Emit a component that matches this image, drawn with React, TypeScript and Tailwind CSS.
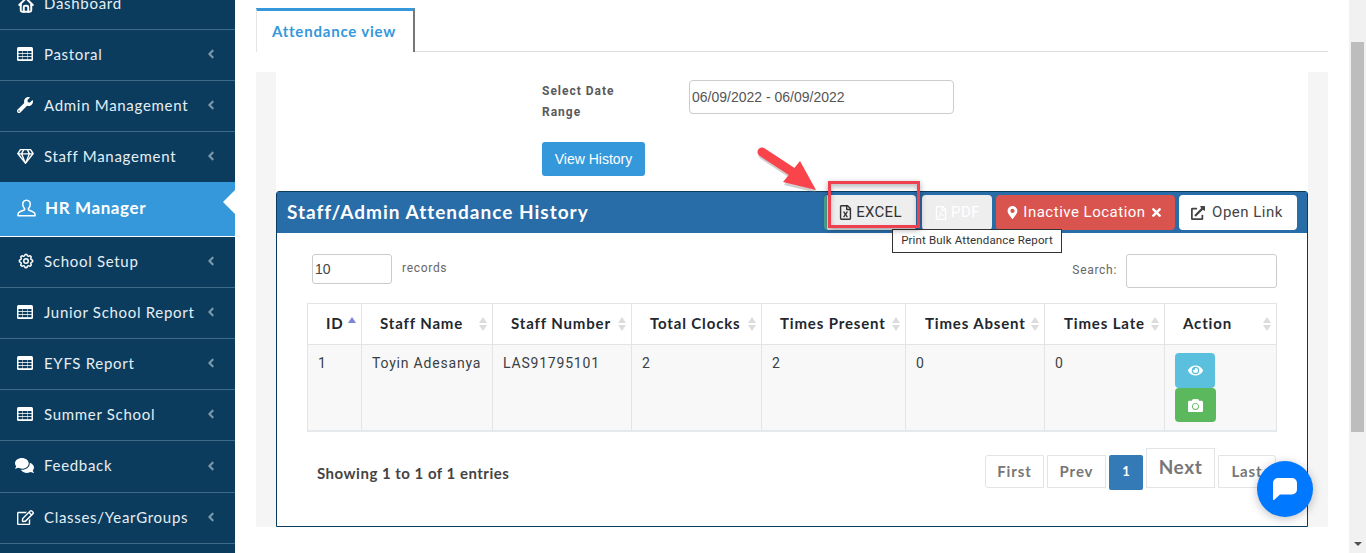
import React from 'react';
import {
  FaWrench,
  FaRegGem,
  FaAngleLeft,
  FaComments,
  FaRegEdit,
  FaRegFileExcel,
  FaRegFilePdf,
  FaMapMarkerAlt,
  FaTimes,
  FaExternalLinkAlt,
  FaEye,
  FaCamera,
} from 'react-icons/fa';
import { TbHome, TbSettings } from 'react-icons/tb';

const raleway = "font-['Lato','Open_Sans',sans-serif]";

// fa-table in the old font: header band and a 3x3 grid
function TableIcon() {
  return (
    <svg width="16" height="14" viewBox="0 0 16 14">
      <rect width="16" height="14" rx="1.5" fill="#fff" />
      <g fill="#0b3c5d">
        {[1.5, 6, 10.5].map((x) =>
          [4, 7, 10].map((y) => <rect key={`${x}-${y}`} x={x} y={y} width="4" height="2.2" />)
        )}
      </g>
    </svg>
  );
}

function UserIcon() {
  return (
    <svg width="19" height="18" viewBox="0 0 19 18" fill="none" stroke="#fff" strokeWidth="1.5" strokeLinejoin="round">
      <path d="M9.5 1.2 C6.8 1.2 5.6 3.2 5.8 5.6 C5.9 7.4 6.6 8.6 7.6 9.6 L7.4 11 C5.4 11.8 1.4 12.4 1 15 L1 16.8 H18 V15 C17.6 12.6 13.6 11.8 11.6 11 L11.4 9.6 C12.4 8.6 13.1 7.4 13.2 5.6 C13.4 3.2 12.2 1.2 9.5 1.2 Z" />
    </svg>
  );
}

const menu = [
  { label: 'Pastoral', icon: <TableIcon />, h: 'h-[51px]' },
  { label: 'Admin Management', icon: <FaWrench size={16} />, h: 'h-[51px]' },
  { label: 'Staff Management', icon: <FaRegGem size={17} />, h: 'h-[50px]', noLine: true },
];

const menu2 = [
  { label: 'School Setup', icon: <TbSettings size={18} />, h: 'h-[51px]' },
  { label: 'Junior School Report', icon: <TableIcon />, h: 'h-[51px]' },
  { label: 'EYFS Report', icon: <TableIcon />, h: 'h-[51px]' },
  { label: 'Summer School', icon: <TableIcon />, h: 'h-[51px]' },
  { label: 'Feedback', icon: <FaComments size={19} className="-ml-[2px]" />, h: 'h-[52px]' },
  { label: 'Classes/YearGroups', icon: <FaRegEdit size={17} />, h: 'h-[51px]' },
];

function MenuItem({ label, icon, h, noLine }: { label: string; icon: React.ReactNode; h: string; noLine?: boolean }) {
  return (
    <div className={`${h} flex items-center pb-[2px] pl-[17px] pr-[17px] ${noLine ? '' : 'border-b border-[#3f6a88]'} text-[15px] tracking-[0.7px] text-[#e6eef4]`}>
      <span className="w-[27px] text-white flex">{icon}</span>
      <span className="flex-1 whitespace-nowrap">{label}</span>
      <FaAngleLeft size={14} className="text-[#7d97aa]" />
    </div>
  );
}

function Sidebar() {
  return (
    <aside className={`w-[235px] shrink-0 h-[553px] bg-[#0b3c5d] overflow-hidden ${raleway}`}>
      <div className="h-[30px] flex items-end pb-[15px] pl-[17px] border-b border-[#3f6a88] text-[15px] tracking-[0.7px] text-[#e6eef4]">
        <span className="w-[27px] text-white flex"><TbHome size={18} strokeWidth={2.6} /></span>
        <span>Dashboard</span>
      </div>
      {menu.map((m) => (
        <MenuItem key={m.label} {...m} />
      ))}
      <div className="relative h-[55px] flex items-center pb-[2px] pl-[17px] bg-[#3498db] border-b border-white text-white text-[17px] font-bold tracking-[0.6px]">
        <span className="w-[28px] flex"><UserIcon /></span>
        <span>HR Manager</span>
        <span className="absolute right-0 top-[8px] w-0 h-0 border-y-[12px] border-y-transparent border-r-[12px] border-r-white" />
      </div>
      {menu2.map((m) => (
        <MenuItem key={m.label} {...m} />
      ))}
    </aside>
  );
}

function SortIcon({ active = false }: { active?: boolean }) {
  return (
    <span className="absolute right-[5px] top-[13px] flex flex-col gap-[2px]">
      <span className={`w-0 h-0 border-x-[4px] border-x-transparent border-b-[6px] ${active ? 'border-b-[#7c85d8]' : 'border-b-[#dcdcdc]'}`} />
      <span className={`w-0 h-0 border-x-[4px] border-x-transparent border-t-[6px] ${active ? 'border-t-transparent' : 'border-t-[#dcdcdc]'}`} />
    </span>
  );
}

const columns = [
  { label: 'ID', w: 'w-[54px]', pl: 'pl-[18px]' },
  { label: 'Staff Name', w: 'w-[131px]', pl: 'pl-[18px]' },
  { label: 'Staff Number', w: 'w-[139px]', pl: 'pl-[18px]' },
  { label: 'Total Clocks', w: 'w-[130px]', pl: 'pl-[18px]' },
  { label: 'Times Present', w: 'w-[144px]', pl: 'pl-[18px]' },
  { label: 'Times Absent', w: 'w-[139px]', pl: 'pl-[19px]' },
  { label: 'Times Late', w: 'w-[120px]', pl: 'pl-[19px]' },
  { label: 'Action', w: 'w-[112px]', pl: 'pl-[18px]' },
];

function AttendanceTable() {
  const row = ['1', 'Toyin Adesanya', 'LAS91795101', '2', '2', '0', '0'];
  return (
    <table className="table-fixed w-[969px] border-collapse ml-[30px] mt-[15px]">
      <thead>
        <tr>
          {columns.map((c, i) => (
            <th
              key={c.label}
              className={`${c.w} ${c.pl} relative h-[41px] pb-[2px] text-left border border-[#e2e4e6] text-[15px] font-bold tracking-[0.85px] text-[#23272e] whitespace-nowrap ${raleway}`}
            >
              {c.label}
              <SortIcon active={i === 0} />
            </th>
          ))}
        </tr>
      </thead>
      <tbody>
        <tr className="bg-[#f8f8f8] border-b-2 border-[#e6e9ec]">
          {row.map((v, i) => (
            <td key={i} className="h-[86px] align-top pt-[8px] pl-[10px] border border-[#e2e4e6] text-[14px] tracking-[0.8px] text-[#3a3f45] font-['Roboto',sans-serif]">
              {v}
            </td>
          ))}
          <td className="h-[86px] align-top pt-[8px] pl-[10px] border border-[#e2e4e6]">
            <div className="w-[40px] h-[35px] bg-[#5bc0de] rounded-[4px] flex items-center justify-center text-white">
              <FaEye size={15} />
            </div>
            <div className="w-[41px] h-[34px] bg-[#5cb85c] rounded-[4px] flex items-center justify-center text-white">
              <FaCamera size={15} />
            </div>
          </td>
        </tr>
      </tbody>
    </table>
  );
}

function Pagination() {
  const cls = `flex items-center justify-center border border-[#e2e4e6] bg-white text-[#777] font-bold ${raleway}`;
  return (
    <div className="flex items-end gap-[3px]">
      <div className={`${cls} w-[59px] h-[33px] text-[15px] tracking-[0.9px] rounded-l-[3px]`}>First</div>
      <div className={`${cls} w-[59px] h-[33px] text-[15px] tracking-[0.9px]`}>Prev</div>
      <div className={`w-[34px] h-[35px] -mb-[2px] bg-[#337ab7] text-white text-[13px] font-bold flex items-center justify-center rounded-[2px] ${raleway}`}>1</div>
      <div className={`${cls} w-[69px] h-[40px] text-[19px] tracking-[0.6px]`}>Next</div>
      <div className={`${cls} w-[58px] h-[33px] text-[15px] tracking-[0.9px] rounded-r-[3px]`}>Last</div>
    </div>
  );
}

function HistoryBox() {
  return (
    <section className="relative mt-[15px] h-[336px] border border-[#0b3c5d] rounded-t-[3px] bg-white">
      <div className="h-[41px] bg-[#286ca8] flex items-center pl-[10px] pr-[10px]">
        <h2 className={`flex-1 text-white text-[19px] font-bold tracking-[1px] ${raleway}`}>Staff/Admin Attendance History</h2>
        <div className="flex items-center gap-[4px] font-['Roboto',sans-serif] text-[15px] tracking-[0.5px]">
          <button className="h-[35px] w-[92px] mr-[2px] pr-[3px] bg-[#eeeeee] border-l-[3px] border-[#4aa58f] rounded-[4px] text-[#333] flex items-center justify-center gap-[3px] text-[15px] tracking-[0.3px]">
            <FaRegFileExcel size={15} />EXCEL
          </button>
          <button className="h-[35px] w-[70px] bg-[#eeeeee] rounded-[4px] text-white flex items-center justify-center gap-[3px] text-[15px]">
            <FaRegFilePdf size={14} />PDF
          </button>
          <button className="h-[35px] w-[179px] pr-[2px] bg-[#d9534f] rounded-[4px] text-white flex items-center justify-center gap-[4px]">
            <FaMapMarkerAlt size={13} />Inactive Location<FaTimes size={13} />
          </button>
          <button className="h-[35px] w-[118px] pr-[2px] bg-white rounded-[4px] text-[#444] flex items-center justify-center gap-[7px]">
            <FaExternalLinkAlt size={14} />Open Link
          </button>
        </div>
      </div>

      <div className="flex items-start justify-between pl-[35px] pr-[30px] pt-[21px]">
        <div className="flex items-start gap-[10px]">
          <input readOnly value="10" className="w-[80px] h-[30px] border border-[#cccccc] rounded-[3px] pl-[2px] text-[14px] text-[#444] font-['Liberation_Sans',sans-serif]" />
          <span className="text-[12px] tracking-[0.7px] text-[#666] font-['Roboto',sans-serif] pt-[5px]">records</span>
        </div>
        <div className="flex items-center gap-[9px]">
          <span className="pb-[2px] text-[12px] tracking-[0.7px] text-[#666] font-['Roboto',sans-serif]">Search:</span>
          <input readOnly className="w-[151px] h-[34px] border border-[#cccccc] rounded-[3px]" />
        </div>
      </div>

      <AttendanceTable />

      <div className="flex items-start justify-between pl-[40px] pr-[31px] pt-[16px]">
        <span className={`pt-[14px] text-[15px] font-bold tracking-[0.5px] text-[#444] ${raleway}`}>Showing 1 to 1 of 1 entries</span>
        <Pagination />
      </div>

      <div className="absolute left-[615px] top-[37px] h-[24px] w-[170px] bg-white border border-[#333] flex items-center justify-center text-[11.5px] tracking-[0.15px] text-[#333] font-['Roboto',sans-serif] whitespace-nowrap">
        Print Bulk Attendance Report
      </div>
    </section>
  );
}

function Annotation() {
  return (
    <>
      <svg className="absolute left-[750px] top-[140px]" width="100" height="60" viewBox="0 0 100 60">
        <g opacity="0.35" transform="translate(1 3)">
          <path d="M12 12 L44 33" stroke="#777" strokeWidth="9" strokeLinecap="round" />
          <path d="M50 21 L66 50 L33 42 Z" fill="#777" />
        </g>
        <path d="M12 12 L44 33" stroke="#f9444b" strokeWidth="9" strokeLinecap="round" />
        <path d="M50 21 L66 50 L33 42 Z" fill="#f9444b" />
      </svg>
      <div className="absolute left-[828px] top-[181px] w-[92px] h-[47px] border-[3px] border-[#ef4050] shadow-[0_2px_6px_rgba(0,0,0,0.35),inset_0_3px_5px_rgba(0,0,0,0.25)]" />
    </>
  );
}

export default function App() {
  return (
    <div className="relative w-[1366px] h-[553px] overflow-hidden flex bg-white font-['Roboto',sans-serif]">
      <Sidebar />
      <main className="flex-1 pl-[21px] pr-[21px] pt-[8px]">
        <div className="h-[44px] border-b border-[#dddddd]">
          <div className={`w-[159px] h-[44px] pr-[2px] bg-white border-t-[3px] border-t-[#3498db] border-r-2 border-r-[#777] border-l border-l-[#e5e5e5] flex items-center justify-center text-[15px] font-bold tracking-[0.8px] text-[#3498db] ${raleway}`}>
            Attendance view
          </div>
        </div>
        <div className="mt-[20px] h-[455px] bg-[#f5f5f5] px-[20px]">
          <div className="h-[455px] bg-white">
            <div className="pl-[266px] pt-[8px] flex">
              <div className="w-[147px] pt-[1px] text-[12px] font-bold leading-[21px] tracking-[1px] text-[#5a5a5a] font-['Roboto',sans-serif]">
                Select Date<br />Range
              </div>
              <input readOnly value="06/09/2022 - 06/09/2022" className="w-[265px] h-[34px] border border-[#cccccc] rounded-[4px] pl-[2px] text-[14px] text-[#555] font-['Liberation_Sans',sans-serif]" />
            </div>
            <button className="ml-[266px] mt-[19px] w-[103px] h-[34px] bg-[#3498db] rounded-[3px] text-white text-[14px] font-['Liberation_Sans',sans-serif]">
              View History
            </button>
            <HistoryBox />
          </div>
        </div>
      </main>

      <div className="w-[17px] shrink-0 bg-[#f1f1f1] flex flex-col items-center">
        <div className="h-[42px]" />
        <div className="h-[390px] w-[13px] bg-[#bdbdbd]" />
        <div className="flex-1 flex items-end justify-center pb-[7px]">
          <span className="w-0 h-0 border-x-[4px] border-x-transparent border-t-[4px] border-t-[#505050]" />
        </div>
      </div>

      <Annotation />

      <div className="absolute left-[1257px] top-[461px] w-[56px] h-[56px] rounded-full bg-[#0078ff] shadow-[0_2px_10px_rgba(0,0,0,0.25)] flex items-center justify-center">
        <svg width="24" height="22" viewBox="0 0 24 22">
          <path d="M5 0 H19 A5 5 0 0 1 24 5 V11.5 A5 5 0 0 1 19 16.5 H7 L1 22 H0 V5 A5 5 0 0 1 5 0 Z" fill="#fff" />
        </svg>
      </div>
    </div>
  );
}
